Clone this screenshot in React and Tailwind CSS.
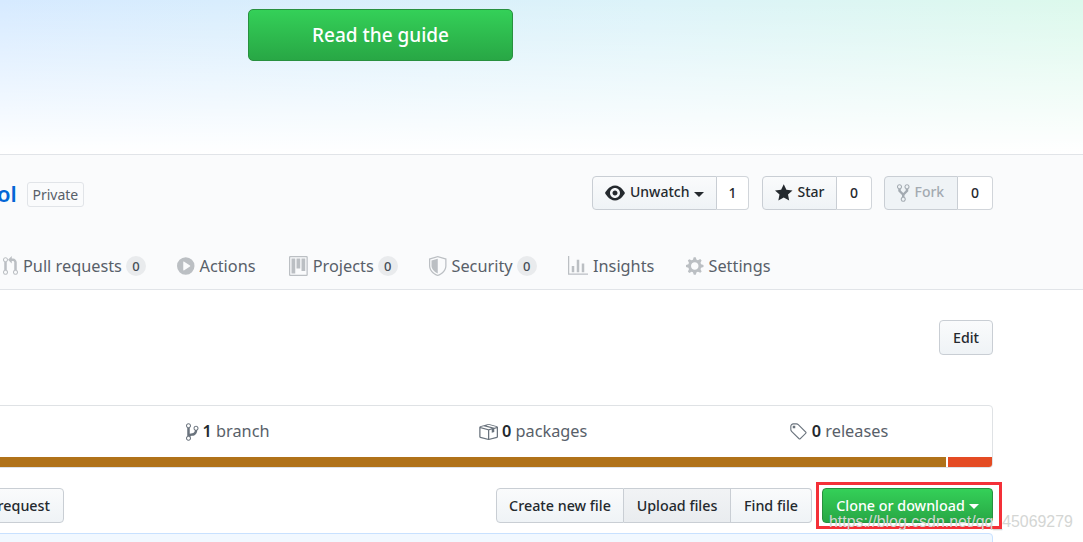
const Octicon = ({ d, w = 16, className = '' }) => (
  <svg viewBox={`0 0 ${w} 16`} width={w * 1.25} height={20} fill="currentColor" className={`shrink-0 ${className}`}>
    <path fillRule="evenodd" d={d} />
  </svg>
);

const icons = {
  eye: 'M8.06 2C3 2 0 8 0 8s3 6 8.06 6C13 14 16 8 16 8s-3-6-7.94-6zM8 12c-2.2 0-4-1.78-4-4 0-2.2 1.8-4 4-4 2.22 0 4 1.8 4 4 0 2.22-1.78 4-4 4zm2-4c0 1.11-.89 2-2 2-1.11 0-2-.89-2-2 0-1.11.89-2 2-2 1.11 0 2 .89 2 2z',
  star: 'M14 6l-4.9-.64L7 1 4.9 5.36 0 6l3.6 3.26L2.67 14 7 11.67 11.33 14l-.93-4.74L14 6z',
  fork: 'M8 1a1.993 1.993 0 00-1 3.72V6L5 8 3 6V4.72A1.993 1.993 0 002 1a1.993 1.993 0 00-1 3.72V6.5l3 3v1.78A1.993 1.993 0 005 15a1.993 1.993 0 001-3.72V9.5l3-3V4.72A1.993 1.993 0 008 1zM2 4.2C1.34 4.2.8 3.65.8 3c0-.65.55-1.2 1.2-1.2.65 0 1.2.55 1.2 1.2 0 .65-.55 1.2-1.2 1.2zm3 10c-.66 0-1.2-.55-1.2-1.2 0-.65.55-1.2 1.2-1.2.65 0 1.2.55 1.2 1.2 0 .65-.55 1.2-1.2 1.2zm3-10c-.66 0-1.2-.55-1.2-1.2 0-.65.55-1.2 1.2-1.2.65 0 1.2.55 1.2 1.2 0 .65-.55 1.2-1.2 1.2z',
  pull: 'M11 11.28V5c-.03-.78-.34-1.47-.94-2.06C9.46 2.35 8.78 2.03 8 2H7V0L4 3l3 3V4h1c.27.02.48.11.69.31.21.2.3.42.31.69v6.28A1.993 1.993 0 0010 15a1.993 1.993 0 001-3.72zm-1 2.92c-.66 0-1.2-.55-1.2-1.2 0-.65.55-1.2 1.2-1.2.65 0 1.2.55 1.2 1.2 0 .65-.55 1.2-1.2 1.2zM4 3c0-1.11-.89-2-2-2a1.993 1.993 0 00-1 3.72v6.56A1.993 1.993 0 002 15a1.993 1.993 0 001-3.72V4.72c.59-.34 1-.98 1-1.72zm-.8 10c0 .66-.55 1.2-1.2 1.2-.65 0-1.2-.55-1.2-1.2 0-.65.55-1.2 1.2-1.2.65 0 1.2.55 1.2 1.2zM2 4.2C1.34 4.2.8 3.65.8 3c0-.65.55-1.2 1.2-1.2.65 0 1.2.55 1.2 1.2 0 .65-.55 1.2-1.2 1.2z',
  play: 'M14 8A7 7 0 110 8a7 7 0 0114 0zm-8.223 3.482l4.599-3.066a.5.5 0 000-.832L5.777 4.518A.5.5 0 005 4.934v6.132a.5.5 0 00.777.416z',
  project: 'M10 12h3V2h-3v10zm-4-2h3V2H6v8zm-4 4h3V2H2v12zm-1 1h13V1H1v14zM14 0H1a1 1 0 00-1 1v14a1 1 0 001 1h13a1 1 0 001-1V1a1 1 0 00-1-1z',
  shield: 'M7 0L0 2v6.02C0 12.69 5.31 16 7 16c1.69 0 7-3.31 7-7.98V2L7 0zM1 2.75L7 1.05l6 1.7V8c0 3.9-4.8 6.95-6 6.95S1 11.9 1 8V2.75zM7 2.2L2 3.6V8c0 2.9 3.4 5.5 5 5.9V2.2z',
  graph: 'M16 14v1H0V0h1v14h15zM5 13H3V8h2v5zm4 0H7V3h2v10zm4 0h-2V6h2v7z',
  gear: 'M14 8.77v-1.6l-1.94-.64-.45-1.09.88-1.84-1.13-1.13-1.81.91-1.09-.45-.69-1.92h-1.6l-.63 1.94-1.11.45-1.84-.88-1.13 1.13.91 1.81-.45 1.09L0 7.23v1.59l1.94.64.45 1.09-.88 1.84 1.13 1.13 1.81-.91 1.09.45.69 1.92h1.59l.63-1.94 1.11-.45 1.84.88 1.13-1.13-.92-1.81.47-1.09L14 8.75v.02zM7 11c-1.66 0-3-1.34-3-3s1.34-3 3-3 3 1.34 3 3-1.34 3-3 3z',
  branch: 'M10 5c0-1.11-.89-2-2-2a1.993 1.993 0 00-1 3.72v.3c-.02.52-.23.98-.63 1.38-.4.4-.86.61-1.38.63-.83.02-1.48.16-2 .45V4.72a1.993 1.993 0 00-1-3.72C.88 1 0 1.89 0 3a2 2 0 001 1.72v6.56c-.59.35-1 .99-1 1.72 0 1.11.89 2 2 2 1.11 0 2-.89 2-2 0-.53-.2-1-.53-1.36.09-.06.48-.41.59-.47.25-.11.56-.17.94-.17 1.05-.05 1.95-.45 2.75-1.25S8.95 7.77 9 6.73h-.02C9.59 6.37 10 5.73 10 5zM2 1.8c.66 0 1.2.55 1.2 1.2 0 .65-.55 1.2-1.2 1.2C1.35 4.2.8 3.65.8 3c0-.65.55-1.2 1.2-1.2zm0 12.41c-.66 0-1.2-.55-1.2-1.2 0-.65.55-1.2 1.2-1.2.65 0 1.2.55 1.2 1.2 0 .65-.55 1.2-1.2 1.2zm6-8c-.66 0-1.2-.55-1.2-1.2 0-.65.55-1.2 1.2-1.2.65 0 1.2.55 1.2 1.2 0 .65-.55 1.2-1.2 1.2z',
  pkg: 'M1 4.27v7.47c0 .45.3.84.75.97l6.5 1.73c.16.05.34.05.5 0l6.5-1.73c.45-.13.75-.52.75-.97V4.27c0-.45-.3-.84-.75-.97l-6.5-1.74a1.4 1.4 0 00-.5 0L1.75 3.3c-.45.13-.75.52-.75.97zm7 9.09l-6-1.59V5l6 1.61v6.75zM2 4l2.5-.67L11 5.06l-2.5.67L2 4zm13 7.77l-6 1.59V6.61l2-.55V8.5l2-.53V5.53L15 5v6.77zm-2-7.24L6.5 2.8l2-.53L15 4l-2 .53z',
  tag: 'M7.73 1.73C7.26 1.26 6.62 1 5.96 1H3.5C2.13 1 1 2.13 1 3.5v2.47c0 .66.27 1.3.73 1.77l6.06 6.06c.39.39 1.02.39 1.41 0l4.59-4.59a.996.996 0 000-1.41L7.73 1.73zM2.38 7.09c-.31-.3-.47-.7-.47-1.13V3.5c0-.88.72-1.59 1.59-1.59h2.47c.42 0 .83.16 1.13.47l6.14 6.13-4.73 4.73-6.13-6.14zM3.01 3h2v2H3V3h.01z',
};

const Caret = () => <span className="mt-[2px] h-0 w-0 border-x-[5px] border-t-[5px] border-x-transparent border-t-current" />;

function SocialButton({ icon, iconW, label, count, caret, disabled, labelW, countW }) {
  return (
    <div className="flex h-[34px] text-[14px] leading-[18px] font-medium">
      <span className={`flex items-center gap-[5px] rounded-l-[4px] border border-[#c9ced4] pl-[12px] ${labelW} ${disabled ? 'bg-[#eff3f6] text-[#a3aab1]' : 'bg-gradient-to-b from-[#fafbfc] to-[#eff3f6] text-[#24292e]'}`}>
        <Octicon d={icon} w={iconW} />
        <span className="-mt-[2px]">{label}</span>
        {caret && <Caret />}
      </span>
      <span className={`flex items-center justify-center rounded-r-[4px] border border-l-0 border-[#d1d5da] bg-white text-[#24292e] ${countW}`}>
        {count}
      </span>
    </div>
  );
}

function Tab({ icon, iconW, label, count, width }) {
  return (
    <span className={`flex items-center gap-[5px] text-[#586069] ${width}`}>
      <Octicon d={icon} w={iconW} className="text-[#bbbfc3]" />
      {label}
      {count !== undefined && (
        <span className="-ml-px flex h-[20px] w-[20px] items-center justify-center rounded-full bg-[#e9ebed] text-[13px] font-medium text-[#444d56]">{count}</span>
      )}
    </span>
  );
}

function Stat({ icon, iconW, n, label, width }) {
  return (
    <span className={`flex items-center gap-[4px] text-[#586069] ${width}`}>
      <Octicon d={icon} w={iconW} className="text-[#6a737d]" />
      <span><b className="font-semibold text-[#24292e]">{n}</b> {label}</span>
    </span>
  );
}

export default function App() {
  return (
    <div className="relative h-[542px] w-[1083px] overflow-hidden bg-white text-[16px] font-['Noto_Sans',sans-serif]">
      {/* hero */}
      <div className="h-[155px] border-b border-[#e1e4e8] bg-[linear-gradient(to_bottom,transparent_0%,#ffffff_100%),linear-gradient(to_right,#d6eaff,#dcf3f9_60%,#dcf9ec)] pl-[248px] pt-[9px]">
        <div className="flex h-[52px] w-[265px] items-center justify-center rounded-[5px] border border-[#28903f] bg-gradient-to-b from-[#34d058] to-[#28a745] text-[19px] font-medium text-white">
          Read the guide
        </div>
      </div>

      {/* repo head */}
      <div className="h-[135px] border-b border-[#e1e4e8] bg-[#fafbfc] pt-[21px]">
        <div className="flex h-[34px] items-center justify-between pr-[90px]">
          <div className="flex items-center">
            <span className="text-[22px] font-semibold leading-none text-[#0366d6]">
              <span className="-ml-[3px] block">ol</span>
            </span>
            <span className="ml-[10px] mt-[2px] flex h-[25px] w-[57px] items-center justify-center rounded-[3px] border border-[#e1e4e8] text-[14px] text-[#586069]">Private</span>
          </div>
          <div className="flex gap-[13px]">
            <SocialButton icon={icons.eye} iconW={16} label="Unwatch" count="1" caret labelW="w-[125px]" countW="w-[32px]" />
            <div className="flex gap-[12px]">
              <SocialButton icon={icons.star} iconW={14} label="Star" count="0" labelW="w-[75px]" countW="w-[35px]" />
              <SocialButton icon={icons.fork} iconW={10} label="Fork" count="0" disabled labelW="w-[74px]" countW="w-[35px]" />
            </div>
          </div>
        </div>
        <div className="mt-[44px] flex items-center pl-[3px] text-[16.3px] leading-[24px]">
          <Tab icon={icons.pull} iconW={12} label="Pull requests" count="0" width="w-[174px]" />
          <Tab icon={icons.play} iconW={14} label="Actions" width="w-[112px]" />
          <Tab icon={icons.project} iconW={15} label="Projects" count="0" width="w-[140px]" />
          <Tab icon={icons.shield} iconW={14} label="Security" count="0" width="w-[139px]" />
          <Tab icon={icons.graph} iconW={16} label="Insights" width="w-[118px]" />
          <Tab icon={icons.gear} iconW={14} label="Settings" />
        </div>
      </div>

      {/* description row */}
      <div className="flex justify-end pr-[90px] pt-[30px]">
        <span className="flex h-[35px] w-[54px] items-center justify-center rounded-[4px] border border-[#c9ced4] bg-gradient-to-b from-[#fafbfc] to-[#eff3f6] text-[14.2px] font-medium text-[#24292e]">Edit</span>
      </div>

      {/* numbers summary */}
      <div className="-ml-[10px] mr-[90px] mt-[50px] overflow-hidden rounded-[4px] border border-[#dfe2e5]">
        <div className="flex h-[51px] items-center pl-[195px] text-[16.3px]">
          <Stat icon={icons.branch} iconW={10} n="1" label="branch" width="w-[292px]" />
          <Stat icon={icons.pkg} iconW={16} n="0" label="packages" width="w-[311px]" />
          <Stat icon={icons.tag} iconW={15} n="0" label="releases" />
        </div>
        <div className="flex h-[10px]">
          <div className="flex-1 bg-[#b07219]" />
          <div className="w-[46px] border-l-2 border-white bg-[#e44b23]" />
        </div>
      </div>

      {/* file buttons */}
      <div className="mt-[20px] flex h-[35px] items-center justify-between pr-[90px] text-[14.3px] font-medium text-[#24292e]">
        <span className="-ml-[36px] flex h-full w-[100px] items-center justify-end whitespace-nowrap rounded-[4px] border border-[#c9ced4] bg-gradient-to-b from-[#fafbfc] to-[#eff3f6] pr-[13px]">Pull request</span>
        <div className="flex h-full gap-[10px]">
          <div className="flex h-full">
            <span className="flex w-[128px] items-center justify-center rounded-l-[4px] border border-[#c9ced4] bg-gradient-to-b from-[#fafbfc] to-[#eff3f6]">Create new file</span>
            <span className="flex w-[107px] items-center justify-center border-y border-r border-[#c9ced4] bg-gradient-to-b from-[#f1f3f5] to-[#e9ecef]">Upload files</span>
            <span className="flex w-[81px] items-center justify-center rounded-r-[4px] border-y border-r border-[#c9ced4] bg-gradient-to-b from-[#fafbfc] to-[#eff3f6]">Find file</span>
          </div>
          <span className="flex w-[171px] items-center justify-center gap-[4px] rounded-[4px] border border-[#28903f] bg-gradient-to-b from-[#34d058] to-[#28a745] text-white">
            Clone or download
            <Caret />
          </span>
        </div>
      </div>

      {/* branch info bar */}
      <div className="-ml-[10px] mr-[90px] mt-[10px] h-[30px] rounded-t-[4px] border border-[#c8e1ff] bg-[#f1f8ff]" />

      {/* highlight and watermark */}
      <div className="absolute left-[816px] top-[482px] h-[47px] w-[186px] border-[3px] border-[#f43038]" />
      <span className="absolute left-[829px] top-[512px] font-['Liberation_Sans',sans-serif] text-[15.9px] leading-[20px] text-[#d4d6d4]">https://blog.csdn.net/qq_45069279</span>
    </div>
  );
}
